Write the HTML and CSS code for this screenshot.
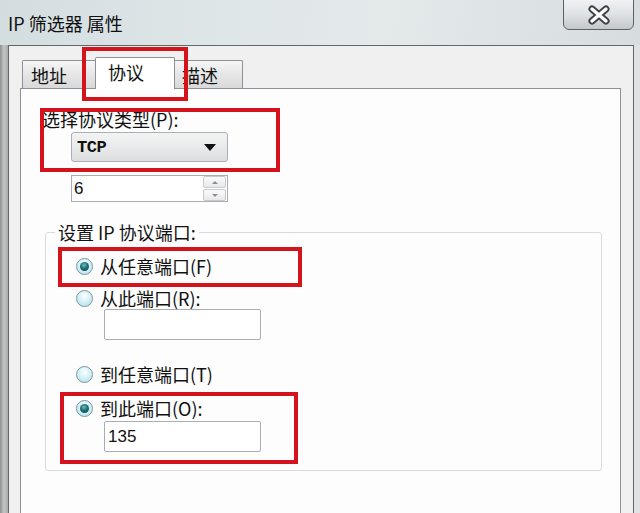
FILE: index.html
```html
<!DOCTYPE html>
<html lang="zh-CN">
<head>
  <meta charset="UTF-8">
  <title>IP 筛选器 属性</title>
  <link rel="stylesheet" href="styles.css">
</head>
<body>
  <div class="screen">
    <div class="titlebar">
      <span class="title">IP 筛选器 属性</span>
      <button class="close" type="button">
        <svg width="24" height="20" viewBox="0 0 24 20">
          <path d="M5 4 L19 16 M19 4 L5 16" stroke="#3b4146" stroke-width="7" stroke-linecap="round"/>
          <path d="M5 4 L19 16 M19 4 L5 16" stroke="#ffffff" stroke-width="3.4" stroke-linecap="round"/>
        </svg>
      </button>
    </div>

    <div class="dialog">
      <div class="tabs">
        <div class="tab tab-addr">地址</div>
        <div class="tab tab-active">协议</div>
        <div class="tab tab-desc">描述</div>
      </div>

      <div class="panel">
        <div class="field-label">选择协议类型(P):</div>
        <div class="select">
          <span class="select-value">TCP</span>
          <span class="select-arrow"></span>
        </div>
        <div class="spin">
          <span class="spin-value">6</span>
          <div class="spin-btns">
            <span class="spin-up"></span>
            <span class="spin-down"></span>
          </div>
        </div>

        <fieldset class="group">
          <legend>设置 IP 协议端口:</legend>
          <div class="radio-row row-1"><span class="radio checked"></span>从任意端口(F)</div>
          <div class="radio-row row-2"><span class="radio"></span>从此端口(R):</div>
          <div class="textbox box-1"></div>
          <div class="radio-row row-3"><span class="radio"></span>到任意端口(T)</div>
          <div class="radio-row row-4"><span class="radio checked"></span>到此端口(O):</div>
          <div class="textbox box-2">135</div>
        </fieldset>
      </div>
    </div>

    <!-- red annotation frames -->
    <div class="mark mark-tab"></div>
    <div class="mark mark-type"></div>
    <div class="mark mark-from"></div>
    <div class="mark mark-to"></div>
  </div>
</body>
</html>
```

FILE: styles.css
```css
html, body { margin: 0; padding: 0; }
body { font-family: "Noto Sans CJK SC", "Liberation Sans", sans-serif; color: #111; }

.screen {
  position: relative;
  width: 640px;
  height: 513px;
  overflow: hidden;
  background: linear-gradient(90deg, #8d8f90 0, #c4c6c6 4px, #a9abab 8px, #dfe2e2 8px);
}

/* title bar */
.titlebar {
  height: 45px;
  display: flex;
  align-items: center;
  background: linear-gradient(100deg, #d3dde0 0%, #dfe6e8 35%, #e4e9ea 60%, #d7dddf 100%);
}
.title { padding-left: 8px; font-size: 18px; line-height: 20px; margin-top: 1px; }
.close {
  align-self: flex-start;
  margin-left: auto;
  margin-right: 6px;
  margin-top: -2px;
  width: 71px;
  height: 32px;
  padding: 0;
  border: 1px solid #5b6166;
  border-radius: 0 0 6px 6px;
  background: linear-gradient(#f1f3f4, #dfe2e4 50%, #c3c8cb);
  display: flex;
  align-items: center;
  justify-content: center;
}
.close svg { margin-top: 2px; }

/* dialog body */
.dialog {
  margin: 0 6px 0 8px;
  height: 480px;
  border: 1px solid #62676b;
  border-bottom: none;
  background: #f0f0f0;
  overflow: hidden;
}

.tabs {
  display: flex;
  align-items: flex-end;
  height: 31px;
  margin: 11px 0 0 13px;
}
.tab {
  position: relative;
  height: 27px;
  border: 1px solid #8c9097;
  border-bottom: none;
  border-radius: 2px 2px 0 0;
  background: linear-gradient(#f6f6f6, #e6e6e6 50%, #d9d9d9);
  font-size: 18px;
  line-height: 28px;
  box-sizing: border-box;
}
.tab-addr { width: 75px; padding-left: 8px; height: 28px; }
.tab-active {
  width: 80px;
  height: 32px;
  margin-left: -2px;
  margin-bottom: -1px;
  padding-left: 12px;
  line-height: 28px;
  background: #fff;
  z-index: 2;
}
.tab-desc { width: 70px; height: 28px; margin-left: -2px; padding-left: 8px; }

.panel {
  position: relative;
  margin-left: 11px;
  width: 601px;
  height: 440px;
  box-sizing: border-box;
  border: 1px solid #8c9097;
  background: #fdfdfe;
  padding: 21px 0 0 24px;
}

.field-label { font-size: 18px; line-height: 18px; margin-left: -3px; }

.select {
  margin: 4px 0 0 26px;
  width: 157px;
  height: 30px;
  box-sizing: border-box;
  border: 1px solid #a9b0b8;
  border-radius: 3px;
  background: linear-gradient(#f3f3f3, #e9eaeb 50%, #dcdedf);
  display: flex;
  align-items: center;
  padding: 0 11px 0 5px;
}
.select-value { font-family: "Liberation Mono", monospace; font-weight: bold; font-size: 17px; letter-spacing: -0.5px; }
.select-arrow {
  margin-left: auto;
  border-left: 6px solid transparent;
  border-right: 6px solid transparent;
  border-top: 7px solid #111;
}

.spin {
  margin: 13px 0 0 26px;
  width: 157px;
  height: 27px;
  box-sizing: border-box;
  border: 1px solid #abadb3;
  background: #fff;
  display: flex;
  align-items: center;
  padding-left: 2px;
}
.spin-value { font-family: "Liberation Sans", sans-serif; font-size: 17px; }
.spin-btns {
  margin-left: auto;
  width: 23px;
  height: 25px;
  display: flex;
  flex-direction: column;
  gap: 1px;
  margin-right: 1px;
}
.spin-btns span {
  flex: 1;
  border: 1px solid #c6c9ce;
  border-radius: 2px;
  background: linear-gradient(#fafafa, #e9e9ea);
  display: flex;
  align-items: center;
  justify-content: center;
}
.spin-up::after {
  content: "";
  border-left: 3px solid transparent;
  border-right: 3px solid transparent;
  border-bottom: 3px solid #8a8d92;
}
.spin-down::after {
  content: "";
  border-left: 3px solid transparent;
  border-right: 3px solid transparent;
  border-top: 3px solid #8a8d92;
}

/* port group */
.group {
  margin: 21px 0 0 0;
  width: 557px;
  min-width: 0;
  box-sizing: border-box;
  padding: 0 0 18px 0;
  border: 1px solid #d5dde3;
  border-radius: 3px;
}
.group legend {
  margin-left: 9px;
  padding: 0 3px;
  font-size: 18px;
  line-height: 18px;
}

.radio-row {
  display: flex;
  align-items: center;
  height: 18px;
  margin-left: 30px;
  font-size: 18px;
  line-height: 18px;
}
.row-1 { margin-top: 16px; }
.row-2 { margin-top: 14px; }
.row-3 { margin-top: 25px; }
.row-4 { margin-top: 16px; }

.radio {
  position: relative;
  width: 17px;
  height: 17px;
  box-sizing: border-box;
  margin-right: 7px;
  border: 1px solid #7a96a2;
  border-radius: 50%;
  background: radial-gradient(circle at 50% 35%, #ffffff 0, #dff4f8 35%, #aedfe9 100%);
}
.radio.checked::after {
  content: "";
  position: absolute;
  left: 3px;
  top: 3px;
  width: 9px;
  height: 9px;
  border-radius: 50%;
  background: radial-gradient(circle at 45% 35%, #6cc0bf 0, #1f6f76 45%, #0b3a42 100%);
}

.textbox {
  margin-left: 58px;
  width: 157px;
  height: 31px;
  box-sizing: border-box;
  border: 1px solid #abadb3;
  border-radius: 2px;
  background: #fff;
  font-family: "Liberation Sans", sans-serif;
  font-size: 17px;
  line-height: 29px;
  padding-left: 3px;
}
.box-1 { margin-top: 2px; }
.box-2 { margin-top: 4px; }

/* annotations */
.mark {
  position: absolute;
  border: 4px solid #d3141d;
  box-sizing: border-box;
  z-index: 5;
}
.mark-tab  { left: 82px; top: 47px;  width: 106px; height: 54px; }
.mark-type { left: 40px; top: 108px; width: 240px; height: 64px; }
.mark-from { left: 58px; top: 247px; width: 244px; height: 40px; }
.mark-to   { left: 60px; top: 392px; width: 238px; height: 72px; }
```
